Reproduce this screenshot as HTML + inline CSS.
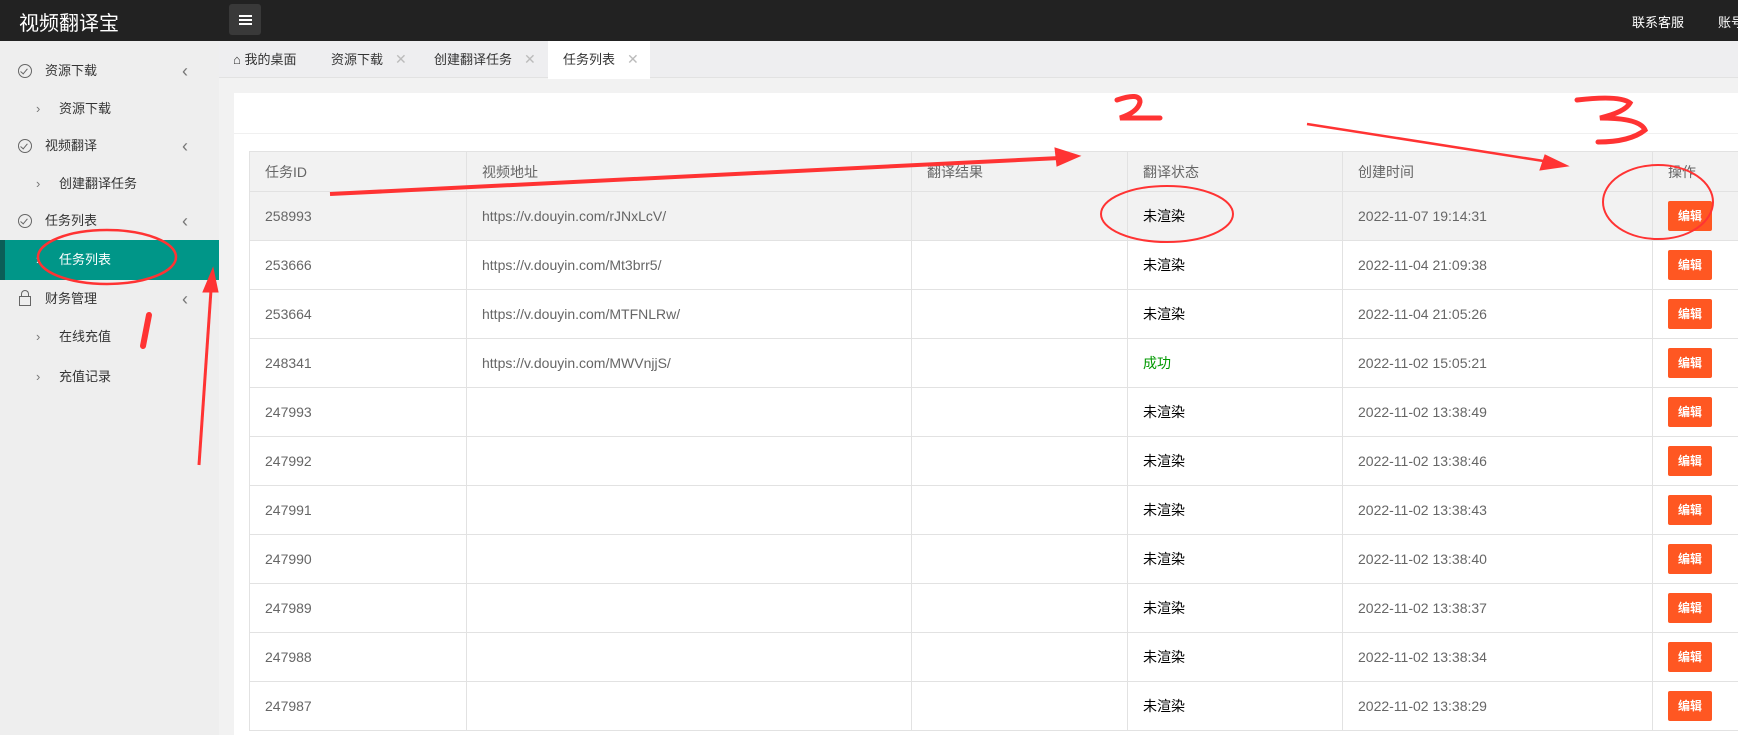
<!DOCTYPE html>
<html style="overflow:hidden;height:735px"><head><meta charset="utf-8"><style>
*{margin:0;padding:0;box-sizing:border-box}
body{width:1738px;height:735px;overflow:hidden;background:#f2f2f2;font-family:"Liberation Sans","Noto Sans CJK SC",sans-serif;font-size:14px;color:#666;position:relative}
.hdr{position:absolute;left:0;top:0;width:1738px;height:41px;background:#222}
.logo{position:absolute;left:19px;top:7px;color:#fff;font-size:20px}
.hb{position:absolute;left:229px;top:4px;width:32px;height:31px;background:#393939;border-radius:3px}
.hb i{position:absolute;left:10px;width:13px;height:2px;background:#fff}
.hr{position:absolute;top:12px;color:#fff;font-size:13px;white-space:nowrap}
.side{position:absolute;left:0;top:41px;width:219px;height:694px;background:#eee}
.it{position:absolute;left:0;width:219px;height:40px;line-height:40px;color:#333;font-size:13px}
.it .ic{position:absolute;left:18px;top:13px;width:14px;height:14px;border:1px solid #666;border-radius:50%}
.it .ic:after{content:"";position:absolute;left:3px;top:2px;width:3px;height:6px;border:solid #666;border-width:0 1px 1px 0;transform:rotate(40deg)}
.it .t{position:absolute;left:45px}
.it .ar{position:absolute;left:182px;color:#777;font-size:18px}
.it.s .t{left:59px}
.it.s .ch{position:absolute;left:36px;color:#777}
.it.act{background:#009688;color:#fff;border-left:5px solid #0b5e57}
.it.act .t{left:54px}.it.act .ch{left:31px;color:#fff}
.tabs{position:absolute;left:219px;top:41px;width:1519px;height:37px;background:#eeeef0;border-bottom:1px solid #e2e2e2}
.tab{position:absolute;top:0;height:37px;line-height:37px;font-size:13px;color:#333;white-space:nowrap}
.tab .x{color:#bbb;margin-left:12px;font-size:14px}
.tab.a{background:#fff;height:38px}
.panel{position:absolute;left:234px;top:93px;width:1504px;height:642px;background:#fff;overflow:hidden}
.ph{height:41px;border-bottom:1px solid #f0f0f0}
table{position:absolute;left:15px;top:58px;width:1515px;border-collapse:collapse;table-layout:fixed}
td,th{border:1px solid #e2e2e2;height:49px;padding:0 15px;text-align:left;font-weight:normal;font-size:14px;color:#666;white-space:nowrap}
th{height:40px;background:#f2f2f2}
tr.h td{background:#f2f2f2}
.st{color:#000}.ok{color:#090}
.btn{display:inline-block;width:44px;height:30px;line-height:30px;text-align:center;background:#ff5722;color:#fff;font-size:12px;border-radius:2px;font-weight:bold}
svg{position:absolute;left:0;top:0}
</style></head><body>
<div class="hdr"><div class="logo">视频翻译宝</div>
<div class="hb"><i style="top:11px"></i><i style="top:15px"></i><i style="top:19px"></i></div>
<div class="hr" style="left:1632px">联系客服</div><div class="hr" style="left:1718px">账号</div></div>
<div class="side">
<div class="it" style="top:10px"><span class="ic"></span><span class="t">资源下载</span><span class="ar">‹</span></div>
<div class="it s" style="top:48px"><span class="ch">›</span><span class="t">资源下载</span></div>
<div class="it" style="top:85px"><span class="ic"></span><span class="t">视频翻译</span><span class="ar">‹</span></div>
<div class="it s" style="top:123px"><span class="ch">›</span><span class="t">创建翻译任务</span></div>
<div class="it" style="top:160px"><span class="ic"></span><span class="t">任务列表</span><span class="ar">‹</span></div>
<div class="it s act" style="top:199px"><span class="ch">›</span><span class="t">任务列表</span></div>
<div class="it" style="top:238px"><span class="t">财务管理</span><span class="ar">‹</span><span style="position:absolute;left:19px;top:17px;width:12px;height:10px;border:1px solid #666"></span><span style="position:absolute;left:21px;top:11px;width:8px;height:7px;border:1px solid #666;border-bottom:0;border-radius:4px 4px 0 0"></span></div>
<div class="it s" style="top:276px"><span class="ch">›</span><span class="t">在线充值</span></div>
<div class="it s" style="top:316px"><span class="ch">›</span><span class="t">充值记录</span></div>
</div>
<div class="tabs">
<div class="tab" style="left:14px">⌂ 我的桌面</div>
<div class="tab" style="left:112px">资源下载<span class="x">✕</span></div>
<div class="tab" style="left:215px">创建翻译任务<span class="x">✕</span></div>
<div class="tab a" style="left:329px;width:102px;padding-left:15px">任务列表<span class="x">✕</span></div>
</div>
<div class="panel"><div class="ph"></div>
<table>
<colgroup><col style="width:217px"><col style="width:445px"><col style="width:216px"><col style="width:215px"><col style="width:310px"><col style="width:112px"></colgroup>
<tr><th>任务ID</th><th>视频地址</th><th>翻译结果</th><th>翻译状态</th><th>创建时间</th><th>操作</th></tr>
<tr class="h"><td>258993</td><td>https://v.douyin.com/rJNxLcV/</td><td></td><td class="st">未渲染</td><td>2022-11-07 19:14:31</td><td><span class="btn">编辑</span></td></tr>
<tr><td>253666</td><td>https://v.douyin.com/Mt3brr5/</td><td></td><td class="st">未渲染</td><td>2022-11-04 21:09:38</td><td><span class="btn">编辑</span></td></tr>
<tr><td>253664</td><td>https://v.douyin.com/MTFNLRw/</td><td></td><td class="st">未渲染</td><td>2022-11-04 21:05:26</td><td><span class="btn">编辑</span></td></tr>
<tr><td>248341</td><td>https://v.douyin.com/MWVnjjS/</td><td></td><td class="ok">成功</td><td>2022-11-02 15:05:21</td><td><span class="btn">编辑</span></td></tr>
<tr><td>247993</td><td></td><td></td><td class="st">未渲染</td><td>2022-11-02 13:38:49</td><td><span class="btn">编辑</span></td></tr>
<tr><td>247992</td><td></td><td></td><td class="st">未渲染</td><td>2022-11-02 13:38:46</td><td><span class="btn">编辑</span></td></tr>
<tr><td>247991</td><td></td><td></td><td class="st">未渲染</td><td>2022-11-02 13:38:43</td><td><span class="btn">编辑</span></td></tr>
<tr><td>247990</td><td></td><td></td><td class="st">未渲染</td><td>2022-11-02 13:38:40</td><td><span class="btn">编辑</span></td></tr>
<tr><td>247989</td><td></td><td></td><td class="st">未渲染</td><td>2022-11-02 13:38:37</td><td><span class="btn">编辑</span></td></tr>
<tr><td>247988</td><td></td><td></td><td class="st">未渲染</td><td>2022-11-02 13:38:34</td><td><span class="btn">编辑</span></td></tr>
<tr><td>247987</td><td></td><td></td><td class="st">未渲染</td><td>2022-11-02 13:38:29</td><td><span class="btn">编辑</span></td></tr>
</table></div>
<svg width="1738" height="735" fill="none" stroke="#f33">
<ellipse cx="107" cy="257" rx="69" ry="27" stroke-width="2.5"/>
<path d="M149 315 L143 346" stroke-width="6" stroke-linecap="round"/>
<path d="M199 465 L211 290" stroke-width="3"/>
<path d="M203 292 L213 268 L218 292 Z" fill="#f33"/>
<path d="M330 194 L1060 158" stroke-width="4"/>
<path d="M1055 148 L1080 156 L1057 166 Z" fill="#f33"/>
<path d="M1117 100 Q1140 92 1140 102 Q1138 112 1120 118 L1160 118" stroke-width="5" stroke-linecap="round"/>
<path d="M1307 124 L1550 162" stroke-width="2.5"/>
<path d="M1545 155 L1568 166 L1540 170 Z" fill="#f33"/>
<path d="M1577 100 Q1620 95 1630 103 Q1625 112 1600 118 Q1640 118 1645 130 Q1630 142 1598 142" stroke-width="5" stroke-linecap="round"/>
<ellipse cx="1167" cy="214" rx="66" ry="28" stroke-width="2"/>
<ellipse cx="1658" cy="202" rx="55" ry="37" stroke-width="2"/>
</svg>
</body></html>
